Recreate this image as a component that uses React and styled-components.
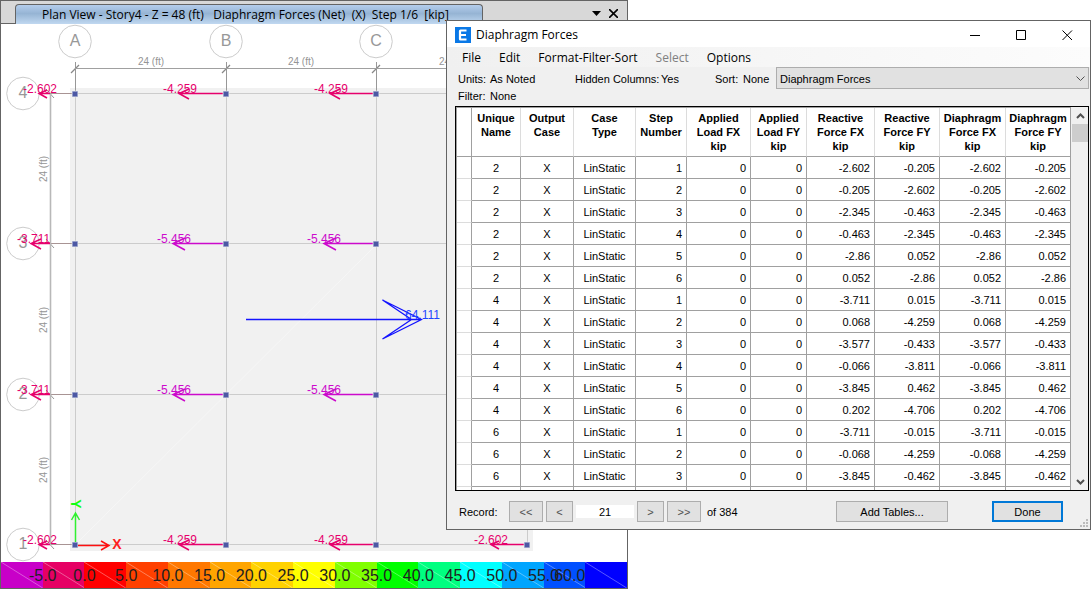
import React from 'react';
import styled, { createGlobalStyle } from 'styled-components';


const uiFont = `'Open Sans', 'Noto Sans', sans-serif`;
const gridFont = `'Liberation Sans', Arial, sans-serif`;

const colorFrame = '#646464';
const colorFace = '#f0f0f0';
const colorLine = '#a0a0a0';
const colorLightLine = '#dcdcdc';
const colorPink = '#e6006c';
const colorMagenta = '#cc0acc';
const colorBlue = '#1414ff';

const GRID_X = [75, 226, 376, 527];
const GRID_Y = [94, 244, 395, 545];

const bubblesX = ['A', 'B', 'C'];
const bubblesY = ['4', '3', '2', '1'];

// x, y: joint position, tip: arrow tip
const forces = [
    { x: 75, y: 94, tip: 39, label: '-2.602', tx: 23, head: 8 },
    { x: 226, y: 94, tip: 179, label: '-4.259', tx: 163, head: 10 },
    { x: 376, y: 94, tip: 330, label: '-4.259', tx: 314, head: 10 },
    { x: 75, y: 244, tip: 31, label: '-3.711', tx: 17, head: 10 },
    { x: 226, y: 244, tip: 173, label: '-5.456', tx: 157, head: 12, color: colorMagenta },
    { x: 376, y: 244, tip: 324, label: '-5.456', tx: 307, head: 12, color: colorMagenta },
    { x: 75, y: 395, tip: 31, label: '-3.711', tx: 17, head: 10 },
    { x: 226, y: 395, tip: 173, label: '-5.456', tx: 157, head: 12, color: colorMagenta },
    { x: 376, y: 395, tip: 324, label: '-5.456', tx: 307, head: 12, color: colorMagenta },
    { x: 75, y: 545, tip: 39, label: '-2.602', tx: 23, head: 8 },
    { x: 226, y: 545, tip: 179, label: '-4.259', tx: 163, head: 10 },
    { x: 376, y: 545, tip: 330, label: '-4.259', tx: 314, head: 10 },
    { x: 527, y: 545, tip: 491, label: '-2.602', tx: 474, head: 8 },
];

const scale = [
    { color: '#c800c8', label: '-5.0' },
    { color: '#e60064', label: '0.0' },
    { color: '#ff0000', label: '5.0' },
    { color: '#ff4000', label: '10.0' },
    { color: '#ff7800', label: '15.0' },
    { color: '#ffa500', label: '20.0' },
    { color: '#ffd200', label: '25.0' },
    { color: '#ffff00', label: '30.0' },
    { color: '#80ff00', label: '35.0' },
    { color: '#00ff00', label: '40.0' },
    { color: '#00ff80', label: '45.0' },
    { color: '#00ffff', label: '50.0' },
    { color: '#00a5ff', label: '55.0' },
    { color: '#0050ff', label: '60.0', inside: true },
    { color: '#0000ff' },
];

const columns = [
    { title: ['Unique', 'Name'], width: 49, align: 'center' },
    { title: ['Output', 'Case'], width: 53, align: 'center' },
    { title: ['Case', 'Type'], width: 62, align: 'center' },
    { title: ['Step', 'Number'], width: 51 },
    { title: ['Applied', 'Load FX', 'kip'], width: 64 },
    { title: ['Applied', 'Load FY', 'kip'], width: 56 },
    { title: ['Reactive', 'Force FX', 'kip'], width: 68 },
    { title: ['Reactive', 'Force FY', 'kip'], width: 65 },
    { title: ['Diaphragm', 'Force FX', 'kip'], width: 66 },
    { title: ['Diaphragm', 'Force FY', 'kip'], width: 65 },
];

// unique name, step, force FX, force FY
const records = [
    ['2', '1', '-2.602', '-0.205'],
    ['2', '2', '-0.205', '-2.602'],
    ['2', '3', '-2.345', '-0.463'],
    ['2', '4', '-0.463', '-2.345'],
    ['2', '5', '-2.86', '0.052'],
    ['2', '6', '0.052', '-2.86'],
    ['4', '1', '-3.711', '0.015'],
    ['4', '2', '0.068', '-4.259'],
    ['4', '3', '-3.577', '-0.433'],
    ['4', '4', '-0.066', '-3.811'],
    ['4', '5', '-3.845', '0.462'],
    ['4', '6', '0.202', '-4.706'],
    ['6', '1', '-3.711', '-0.015'],
    ['6', '2', '-0.068', '-4.259'],
    ['6', '3', '-3.845', '-0.462'],
];

const toCells = ([name, step, fx, fy]) => [name, 'X', 'LinStatic', step, '0', '0', fx, fy, fx, fy];


const PlanDrawing = () => (
    <Drawing viewBox="1 24 626 538" preserveAspectRatio="xMinYMin slice">
        <rect x="70" y="88" width="463" height="463" fill="#f1f1f1" />
        <g stroke="#cccccc" strokeWidth="1" shapeRendering="crispEdges">
            {GRID_X.map(x => <line key={x} x1={x + .5} x2={x + .5} y1="94" y2="545" />)}
            {GRID_Y.map(y => <line key={y} x1="75" x2="527" y1={y - .5} y2={y - .5} />)}
        </g>
        <path d="M75 545L377 244" stroke="#f6f6f6" />

        {/* grid bubbles */}
        {bubblesX.map((name, i) => (
            <g key={name}>
                <circle cx={GRID_X[i]} cy="41.5" r="16.3" fill="none" stroke="#cccccc" />
                <BubbleText x={GRID_X[i]} y="46">{name}</BubbleText>
                <line x1={GRID_X[i] + .5} x2={GRID_X[i] + .5} y1="62" y2="94" stroke="#989898" />
                <line x1={GRID_X[i] - 4} x2={GRID_X[i] + 4} y1="73" y2="65" stroke="#888" strokeWidth="1.2" />
            </g>
        ))}
        {bubblesY.map((name, i) => (
            <g key={name}>
                <circle cx="23" cy={GRID_Y[i] - .5} r="16.3" fill="none" stroke="#cccccc" />
                <BubbleText x="23" y={GRID_Y[i] + 4}>{name}</BubbleText>
                <line x1="45" x2="75" y1={GRID_Y[i] - .5} y2={GRID_Y[i] - .5} stroke="#a89494" />
                <line x1="46" x2="54" y1={GRID_Y[i] - 5} y2={GRID_Y[i] + 4} stroke="#989898" />
            </g>
        ))}

        {/* dimensions */}
        <path d="M75 68.5H540" stroke="#a0a0a0" />
        <path d="M50.5 94V545" stroke="#b8b8b8" strokeWidth="1.6" />
        {[151, 301, 452].map(x => <DimText key={x} x={x} y="65">24 (ft)</DimText>)}
        {[169, 320, 470].map(y => (
            <DimText key={y} transform={`translate(47 ${y}) rotate(-90)`}>24 (ft)</DimText>
        ))}

        {/* joint forces */}
        {forces.map(({ x, y, tip, label, tx, head, color = colorPink }) => (
            <g key={`${x}-${y}`}>
                <path
                    d={`M${tip} ${y - .5}H${x === 75 ? 50 : x}M${tip + head} ${y - head / 2}L${tip} ${y - .5}L${tip + head} ${y + head / 2}`}
                    fill="none"
                    stroke={color}
                    strokeWidth="1.5"
                />
                <ForceText x={tx} y={y - 1} fill={color}>{label}</ForceText>
                <rect x={x - 3} y={y - 3} width="6" height="6" fill="#7480b8" stroke="#f4f4f4" strokeWidth=".5" />
                <path d={`M${x - 2} ${y - 2}h4v4h-4z`} fill="#4c58a4" />
            </g>
        ))}

        {/* resultant */}
        <path
            d="M246 319.5H421.5M382.5 300L421.5 319.5L382.5 339L411.5 319.5Z"
            fill="none"
            stroke={colorBlue}
            strokeWidth="1.3"
        />
        <ForceText x="405" y="319" fill="#1e46ff">64.111</ForceText>

        {/* axes */}
        <path d="M78 545.5H109M101 541L109 545.5L101 550" fill="none" stroke="#ff1010" strokeWidth="1.5" />
        <path d="M75.5 542V513M71.5 520L75.5 513L79.5 520" fill="none" stroke="#30f030" strokeWidth="1.5" />
        <AxisText x="117" y="549" fill="#ff2020">X</AxisText>
        <AxisText transform="translate(71 504) rotate(90)" fill="#10ff10">Y</AxisText>
    </Drawing>
);


const PlanView = () => (
    <PlanWindow>
        <TabBar>
            <Tab>{'Plan View - Story4 - Z = 48 (ft)   Diaphragm Forces (Net)  (X)  Step 1/6  [kip]'}</Tab>
            <TabTools>
                <ToolButton aria-label="Windows">
                    <svg width="9" height="5"><path d="M0 0h9L4.500 5z" /></svg>
                </ToolButton>
                <ToolButton aria-label="Close view">
                    <svg width="9" height="9"><path d="M0 0L9 9M9 0L0 9" stroke="#000" strokeWidth="1.6" /></svg>
                </ToolButton>
            </TabTools>
        </TabBar>
        <PlanDrawing />
        <ScaleBar>
            {scale.map(({ color, label, inside }) => (
                <ScaleCell key={color} $color={color}>
                    <ScaleLine viewBox="0 0 42 26" preserveAspectRatio="none">
                        <path d="M0 0L42 26" stroke="#fff" strokeOpacity=".35" />
                    </ScaleLine>
                    {label && <ScaleLabel $inside={inside}>{label}</ScaleLabel>}
                </ScaleCell>
            ))}
        </ScaleBar>
    </PlanWindow>
);


const ForcesTable = () => (
    <GridFrame>
        <GridView>
            <Table>
                <colgroup>
                    <Col $width={15} />
                    {columns.map(({ width }, i) => <Col key={i} $width={width} />)}
                </colgroup>
                <thead>
                    <tr>
                        <HeadCell $corner />
                        {columns.map(({ title }) => (
                            <HeadCell key={title.join(' ')} scope="col">
                                {title.map(line => <HeadLine key={line}>{line}</HeadLine>)}
                            </HeadCell>
                        ))}
                    </tr>
                </thead>
                <tbody>
                    {records.map((record, r) => (
                        <tr key={r}>
                            <Selector />
                            {toCells(record).map((value, c) => (
                                <Cell key={c} $align={columns[c].align}>{value}</Cell>
                            ))}
                        </tr>
                    ))}
                    <tr>
                        <Selector />
                        {columns.map((column, c) => <Cell key={c} />)}
                    </tr>
                </tbody>
            </Table>
        </GridView>
        <ScrollBar>
            <ScrollButton aria-label="Scroll up">
                <svg width="9" height="6"><path d="M1 5L4.500 1.500L8 5" fill="none" stroke="#505050" strokeWidth="2" /></svg>
            </ScrollButton>
            <ScrollThumb />
            <ScrollButton aria-label="Scroll down">
                <svg width="9" height="6"><path d="M1 1L4.500 4.500L8 1" fill="none" stroke="#505050" strokeWidth="2" /></svg>
            </ScrollButton>
        </ScrollBar>
    </GridFrame>
);


const ForcesDialog = () => (
    <Dialog>
        <TitleBar>
            <svg width="16" height="16">
                <rect width="16" height="16" fill="#0a78e6" />
                <path d="M11.500 3.500H5.500Q5 3.500 5 4V12Q5 12.500 5.500 12.500H11.500M5 8H11" fill="none" stroke="#fff" strokeWidth="2.200" />
            </svg>
            <Title>Diaphragm Forces</Title>
            <WindowButton aria-label="Minimize">
                <svg width="11" height="11"><path d="M0 5.500H10" stroke="#000" /></svg>
            </WindowButton>
            <WindowButton aria-label="Maximize">
                <svg width="11" height="11"><path d="M.5 .5H9.500V9.500H.5Z" fill="none" stroke="#000" /></svg>
            </WindowButton>
            <WindowButton aria-label="Close">
                <svg width="11" height="11"><path d="M.5 .5L10 10M10 .5L.5 10" stroke="#000" /></svg>
            </WindowButton>
        </TitleBar>
        <MenuBar>
            <MenuButton>File</MenuButton>
            <MenuButton>Edit</MenuButton>
            <MenuButton>Format-Filter-Sort</MenuButton>
            <MenuButton disabled>Select</MenuButton>
            <MenuButton>Options</MenuButton>
        </MenuBar>
        <Info>
            <InfoText>Units:</InfoText>
            <InfoText>As Noted</InfoText>
            <InfoText>Hidden Columns:</InfoText>
            <InfoText>Yes</InfoText>
            <InfoText>Sort:</InfoText>
            <InfoText>None</InfoText>
            <SelectBox>
                <Select aria-label="Table" defaultValue="Diaphragm Forces">
                    <option>Diaphragm Forces</option>
                </Select>
                <Chevron width="9" height="6">
                    <path d="M.5 .5L4.500 4.500L8.500 .5" fill="none" stroke="#505050" />
                </Chevron>
            </SelectBox>
        </Info>
        <FilterRow>
            <span>Filter:</span>
            <span>None</span>
        </FilterRow>
        <ForcesTable />
        <Footer>
            <RecordLabel htmlFor="record">Record:</RecordLabel>
            <Button $width={34} $muted>&lt;&lt;</Button>
            <Button $width={27} $muted>&lt;</Button>
            <RecordInput id="record" defaultValue="21" />
            <Button $width={27} $muted>&gt;</Button>
            <Button $width={34} $muted>&gt;&gt;</Button>
            <Total>of 384</Total>
            <Actions>
                <Button $width={112}>Add Tables...</Button>
                <Button $width={71} $primary>Done</Button>
            </Actions>
            <Grip width="8" height="8">
                <path d="M6 0h2v2h-2zM3 3h2v2h-2zM6 3h2v2h-2zM0 6h2v2h-2zM3 6h2v2h-2zM6 6h2v2h-2z" fill="#bcbcbc" />
            </Grip>
        </Footer>
    </Dialog>
);


const App = () => (
    <Desktop>
        <GlobalStyle />
        <PlanView />
        <ForcesDialog />
    </Desktop>
);


export default App;


const GlobalStyle = createGlobalStyle`
    * {
        box-sizing: border-box;
    }

    body {
        margin: 0;
        background: #fff;
        color: #000;
        font: 11px/14px ${gridFont};
    }

    button, input, select {
        margin: 0;
        padding: 0;
        border: 0;
        border-radius: 0;
        background: none;
        color: inherit;
        font: inherit;
    }
`;

const Desktop = styled.main`
    position: relative;
    display: flex;
    min-height: 100vh;
    overflow: hidden;
`;

const PlanWindow = styled.section`
    display: flex;
    flex-direction: column;
    width: calc(100% - 463px);
    border: 1px solid ${colorFrame};
`;

const TabBar = styled.header`
    display: flex;
    align-items: flex-end;
    justify-content: space-between;
    height: 23px;
    padding-left: 14px;
    background: linear-gradient(#d8d8d8 22px, ${colorFrame} 22px);
`;

const Tab = styled.div`
    width: 468px;
    height: 20px;
    padding-left: 26px;
    border: 1px solid ${colorFrame};
    border-bottom: 0;
    border-radius: 4px 4px 0 0;
    background: linear-gradient(#b4cdec, #96b4d4 45%, #c0d8f0);
    font: 12px/20px ${uiFont};
    white-space: pre;
`;

const TabTools = styled.div`
    display: flex;
    align-items: center;
    gap: 8px;
    height: 20px;
    padding: 0 9px 2px 0;
`;

const ToolButton = styled.button`
    display: flex;
`;

const Drawing = styled.svg`
    display: block;
    flex: 1;
    width: 100%;
    min-height: 0;
    background: #fff;
`;

const BubbleText = styled.text`
    fill: #989898;
    font: 16px ${gridFont};
    text-anchor: middle;
`;

const DimText = styled.text`
    fill: #949494;
    font: 10px ${gridFont};
    text-anchor: middle;
`;

const ForceText = styled.text`
    font: 12px ${gridFont};
`;

const AxisText = styled.text`
    font: bold 14px ${gridFont};
    text-anchor: middle;
`;

const ScaleBar = styled.footer`
    display: flex;
    height: 26px;
`;

const ScaleCell = styled.div`
    position: relative;
    flex: 1;
    background: ${({ $color }) => $color};
`;

const ScaleLine = styled.svg`
    display: block;
    width: 100%;
    height: 100%;
`;

const ScaleLabel = styled.span`
    position: absolute;
    z-index: 1;
    top: 0;
    right: 0;
    color: #202020;
    font-size: 16px;
    line-height: 28px;
    transform: ${({ $inside }) => ($inside ? 'none' : 'translateX(50%)')};
`;

const Dialog = styled.section`
    position: absolute;
    z-index: 2;
    top: 20px;
    right: 0;
    bottom: 59px;
    left: 446px;
    display: flex;
    flex-direction: column;
    border: 1px solid ${colorFrame};
    background: ${colorFace};
`;

const TitleBar = styled.header`
    display: flex;
    align-items: center;
    height: 26px;
    padding: 2px 0 0 8px;
    background: #fff;
`;

const Title = styled.h1`
    flex: 1;
    margin: 0 0 0 5px;
    font: 12px/16px ${uiFont};
`;

const WindowButton = styled.button`
    display: flex;
    justify-content: center;
    align-items: center;
    width: 46px;
    height: 24px;
`;

const MenuBar = styled.nav`
    display: flex;
    height: 20px;
    padding: 2px 0 0 6px;
    background: linear-gradient(90deg, ${colorFace}, #fcfcfc);
`;

const MenuButton = styled.button`
    padding: 0 9px;
    font: 12px/18px ${uiFont};

    &:disabled {
        color: #808080;
    }
`;

const Info = styled.div`
    display: grid;
    grid-template-columns: 32px 85px 86px 54px 28px 33px 1fr;
    align-items: center;
    height: 22px;
    padding: 0 1px 0 11px;
`;

const InfoText = styled.span`
    padding-top: 2px;
`;

const SelectBox = styled.div`
    position: relative;
`;

const Select = styled.select`
    display: block;
    width: 100%;
    height: 22px;
    padding: 1px 24px 0 3px;
    border: 1px solid #adadad;
    background: #e1e1e1;
    appearance: none;
`;

const Chevron = styled.svg`
    position: absolute;
    top: 9px;
    right: 4px;
    pointer-events: none;
`;

const FilterRow = styled.div`
    display: grid;
    grid-template-columns: 32px 1fr;
    height: 17px;
    padding-left: 11px;
`;

const GridFrame = styled.div`
    display: flex;
    flex: 1;
    min-height: 0;
    margin: 0 1px 0 8px;
    border: 1px solid #000;
`;

const GridView = styled.div`
    flex: 1;
    min-width: 0;
    overflow: hidden;
    border: 1px solid ${colorLine};
    border-width: 1px 1px 0;
    background: #fff;
`;

const Table = styled.table`
    width: 100%;
    border-spacing: 0;
    table-layout: fixed;
`;

const Col = styled.col`
    width: ${({ $width }) => $width}px;
`;

const HeadCell = styled.th`
    height: 49px;
    padding: 3px 0 0;
    border-right: 1px solid ${({ $corner }) => ($corner ? colorLine : colorLightLine)};
    border-bottom: 1px solid ${colorLine};
    line-height: 14px;
    vertical-align: top;
`;

const HeadLine = styled.span`
    display: block;
`;

const Selector = styled.td`
    border-right: 1px solid ${colorLine};
    border-bottom: 1px solid ${colorLightLine};
`;

const Cell = styled.td`
    height: 22px;
    padding: 0 4px;
    border-right: 1px solid ${colorLine};
    border-bottom: 1px solid ${colorLine};
    text-align: ${({ $align }) => $align || 'right'};
`;

const ScrollBar = styled.div`
    display: flex;
    flex-direction: column;
    width: 17px;
    padding-left: 1px;
    background: ${colorFace};
`;

const ScrollButton = styled.button`
    display: flex;
    align-items: center;
    justify-content: center;
    height: 17px;

    &:last-child {
        margin-top: auto;
    }
`;

const ScrollThumb = styled.div`
    height: 18px;
    background: #cdcdcd;
`;

const Footer = styled.footer`
    position: relative;
    display: flex;
    align-items: center;
    gap: 3px;
    height: 38px;
    padding: 3px 27px 0 12px;
`;

const RecordLabel = styled.label`
    width: 47px;
`;

const Button = styled.button`
    width: ${({ $width }) => $width}px;
    height: 21px;
    border: ${({ $primary }) => ($primary ? '2px solid #0078d7' : '1px solid #adadad')};
    background: #e1e1e1;
    color: ${({ $muted }) => ($muted ? '#505050' : '#000')};
`;

const RecordInput = styled.input`
    width: 58px;
    height: 13px;
    background: #fff;
    text-align: center;
`;

const Total = styled.span`
    padding-left: 3px;
`;

const Actions = styled.div`
    display: flex;
    gap: 44px;
    margin-left: auto;
`;

const Grip = styled.svg`
    position: absolute;
    right: 2px;
    bottom: 2px;
`;
